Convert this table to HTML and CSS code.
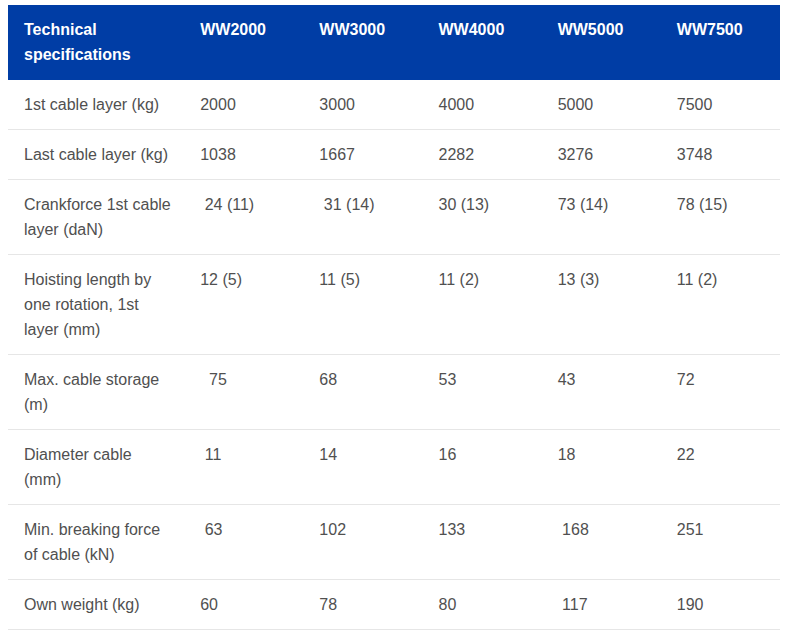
FILE: index.html
```html
<!DOCTYPE html>
<html>
<head>
<meta charset="utf-8">
<link rel="stylesheet" href="styles.css">
</head>
<body>
<table class="specs">
  <colgroup>
    <col class="c-label">
    <col class="c-val">
    <col class="c-val">
    <col class="c-val">
    <col class="c-val">
    <col class="c-val">
  </colgroup>
  <thead>
    <tr>
      <th>Technical specifications</th>
      <th>WW2000</th>
      <th>WW3000</th>
      <th>WW4000</th>
      <th>WW5000</th>
      <th>WW7500</th>
    </tr>
  </thead>
  <tbody>
    <tr><td>1st cable layer (kg)</td><td>2000</td><td>3000</td><td>4000</td><td>5000</td><td>7500</td></tr>
    <tr><td>Last cable layer (kg)</td><td>1038</td><td>1667</td><td>2282</td><td>3276</td><td>3748</td></tr>
    <tr><td>Crankforce 1st cable layer (daN)</td><td>&nbsp;24 (11)</td><td>&nbsp;31 (14)</td><td>30 (13)</td><td>73 (14)</td><td>78 (15)</td></tr>
    <tr><td>Hoisting length by one rotation, 1st layer (mm)</td><td>12 (5)</td><td>11 (5)</td><td>11 (2)</td><td>13 (3)</td><td>11 (2)</td></tr>
    <tr><td>Max. cable storage (m)</td><td>&nbsp;&nbsp;75</td><td>68</td><td>53</td><td>43</td><td>72</td></tr>
    <tr><td>Diameter cable (mm)</td><td>&nbsp;11</td><td>14</td><td>16</td><td>18</td><td>22</td></tr>
    <tr><td>Min. breaking force of cable (kN)</td><td>&nbsp;63</td><td>102</td><td>133</td><td>&nbsp;168</td><td>251</td></tr>
    <tr><td>Own weight (kg)</td><td>60</td><td>78</td><td>80</td><td>&nbsp;117</td><td>190</td></tr>
  </tbody>
</table>
</body>
</html>
```
FILE: styles.css
```css
body {
  margin: 5px 14px 8px 8px;
  background: #ffffff;
  font-family: "Liberation Sans", Arial, sans-serif;
}

.specs {
  width: 772px;
  border-collapse: collapse;
  table-layout: fixed;
  font-size: 16px;
  line-height: 25px;
}

.c-label { width: 176px; }
.c-val { width: 119px; }

.specs th,
.specs td {
  text-align: left;
  vertical-align: top;
  padding: 12px 12px 12px 16px;
}

.specs thead th {
  background: #003da5;
  color: #ffffff;
  font-weight: bold;
  padding-top: 12px;
  padding-bottom: 13px;
}

.specs tbody td {
  color: #505050;
  border-bottom: 1px solid #e6e6e6;
}
```
